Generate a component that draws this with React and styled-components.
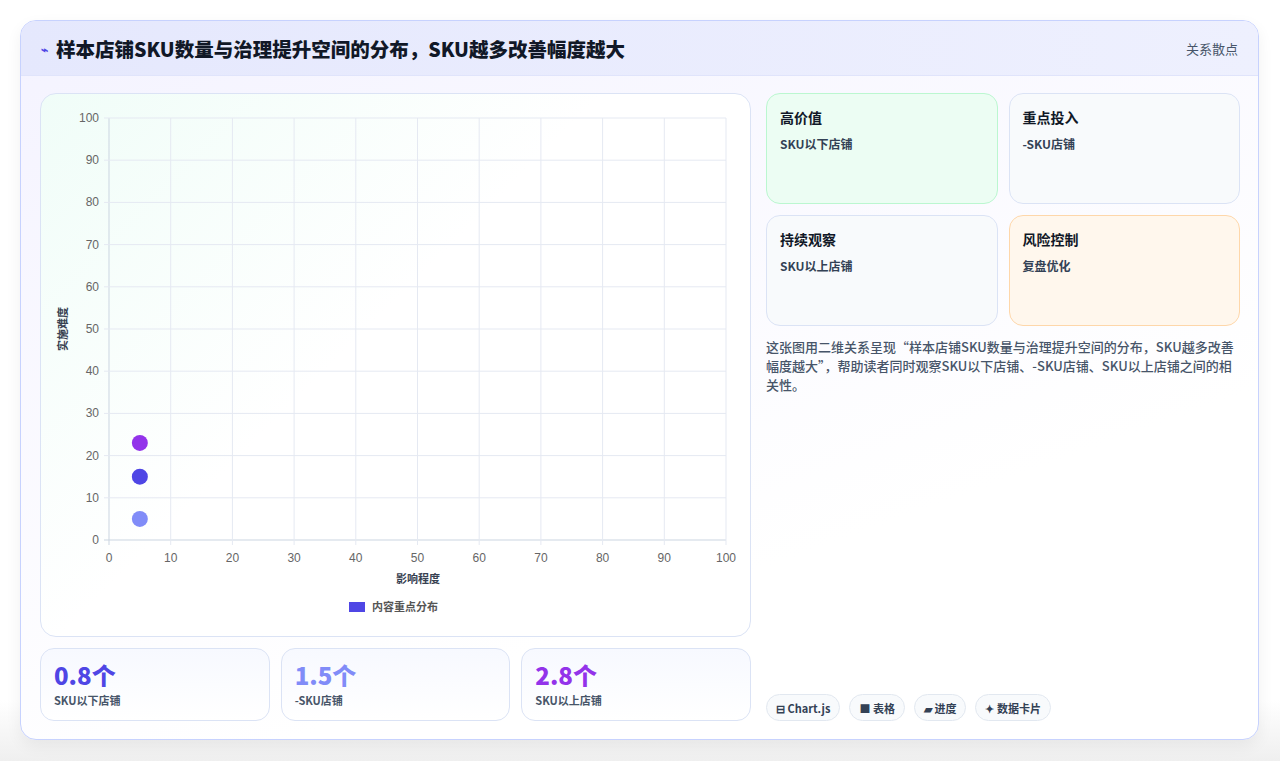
import React from "react";
import styled, { createGlobalStyle } from "styled-components";

const G = createGlobalStyle`
  body{margin:0;background:#f1f1f3;font-family:"Noto Sans CJK SC","Noto Sans",sans-serif;}
`;
const Page = styled.div`padding:20px 21px 21px 20px;height:761px;box-sizing:border-box;background:linear-gradient(#fff 0,#fff 700px,#efefef 761px);`;
const Card = styled.div`height:720px;box-sizing:border-box;border:1px solid #c7d2fe;border-radius:16px;overflow:hidden;display:flex;flex-direction:column;background:linear-gradient(160deg,#f4f3ff,#ffffff 70%);box-shadow:0 6px 16px rgba(0,0,0,.06);`;
const Header = styled.div`height:54px;flex:none;display:flex;align-items:center;justify-content:space-between;padding:0 20px;background:linear-gradient(90deg,#e5e8fd,#eef0fe);border-bottom:1px solid #e0e4fb;`;
const Title = styled.h1`margin:0;font-size:19.5px;font-weight:900;color:#111827;display:flex;align-items:center;gap:8px;`;
const Tag = styled.span`font-size:13px;color:#475569;`;
const Body = styled.div`flex:1;display:flex;gap:15px;padding:17px 18px 18px 19px;`;
const Left = styled.div`width:711px;display:flex;flex-direction:column;gap:11px;`;
const ChartBox = styled.div`height:544px;box-sizing:border-box;border:1px solid #dbe3f5;border-radius:16px;background:linear-gradient(135deg,#f0fdf8,#fff 45%);`;
const Stats = styled.div`display:grid;grid-template-columns:repeat(3,1fr);gap:11px;`;
const Stat = styled.div`height:73px;box-sizing:border-box;border:1px solid #dbe3f5;border-radius:14px;background:linear-gradient(#f7f9ff,#fff);padding:10px 13px;`;
const Val = styled.div`font-size:24px;font-weight:900;color:${p=>p.c};line-height:32px;`;
const Lab = styled.div`font-size:11px;font-weight:700;color:#475569;margin-top:1px;`;
const Right = styled.div`flex:1;display:flex;flex-direction:column;`;
const Quads = styled.div`display:grid;grid-template-columns:1fr 1fr;gap:11px;`;
const Quad = styled.div`height:111px;box-sizing:border-box;border:1px solid ${p=>p.b};border-radius:14px;background:${p=>p.bg};padding:13px 13px;`;
const QT = styled.div`font-size:14px;font-weight:700;color:#111827;`;
const QS = styled.div`font-size:12px;font-weight:700;color:#334155;margin-top:8px;`;
const Desc = styled.p`margin:11px 0 0;font-size:13px;line-height:19px;color:#475569;font-weight:500;`;
const Chips = styled.div`margin-top:auto;display:flex;gap:9px;`;
const Chip = styled.span`height:27px;box-sizing:border-box;padding:0 9px;border:1px solid #e2e8f0;border-radius:14px;background:#f8fafc;font-size:11px;font-weight:700;color:#334155;display:flex;align-items:center;gap:3px;`;

const L=68,R=685,T=24,B=446;
const sx=v=>L+(R-L)*v/100, sy=v=>B-(B-T)*v/100;
const ticks=[0,10,20,30,40,50,60,70,80,90,100];

function Chart(){
  return <svg width="709" height="542" style={{display:"block"}} fontFamily="'Liberation Sans',Arial,sans-serif">
    {ticks.map(t=><g key={t}>
      <line x1={sx(t)} x2={sx(t)} y1={T} y2={B+5} stroke={t===0?"#cbd5e1":"#e5e9f2"}/>
      <line x1={L-5} x2={R} y1={sy(t)} y2={sy(t)} stroke={t===0?"#cbd5e1":"#e5e9f2"}/>
      <text x={L-10} y={sy(t)+4} textAnchor="end" fontSize="12" fill="#666">{t}</text>
      <text x={sx(t)} y={B+22} textAnchor="middle" fontSize="12" fill="#666">{t}</text>
    </g>)}
    <text x={377} y={489} textAnchor="middle" fontSize="11" fontWeight="700" fill="#374151" fontFamily="'Noto Sans CJK SC',sans-serif">影响程度</text>
    <text transform="translate(26 235) rotate(-90)" textAnchor="middle" fontSize="11" fontWeight="700" fill="#374151" fontFamily="'Noto Sans CJK SC',sans-serif">实施难度</text>
    <rect x="308" y="508" width="16" height="10" fill="#4f46e5"/>
    <text x="331" y="517" fontSize="11" fontWeight="700" fill="#555" fontFamily="'Noto Sans CJK SC',sans-serif">内容重点分布</text>
    <circle cx={sx(5)} cy={sy(23)} r="8" fill="#9333ea"/>
    <circle cx={sx(5)} cy={sy(15)} r="8" fill="#4f46e5"/>
    <circle cx={sx(5)} cy={sy(5)} r="8" fill="#818cf8"/>
  </svg>;
}

export default function App(){
  return <><G/><Page><Card>
    <Header>
      <Title><span style={{color:"#4f46e5",fontSize:12}}>⌁</span>样本店铺SKU数量与治理提升空间的分布，SKU越多改善幅度越大</Title>
      <Tag>关系散点</Tag>
    </Header>
    <Body>
      <Left>
        <ChartBox><Chart/></ChartBox>
        <Stats>
          <Stat><Val c="#4f46e5">0.8个</Val><Lab>SKU以下店铺</Lab></Stat>
          <Stat><Val c="#818cf8">1.5个</Val><Lab>-SKU店铺</Lab></Stat>
          <Stat><Val c="#9333ea">2.8个</Val><Lab>SKU以上店铺</Lab></Stat>
        </Stats>
      </Left>
      <Right>
        <Quads>
          <Quad b="#bbf7d0" bg="#ecfdf3"><QT>高价值</QT><QS>SKU以下店铺</QS></Quad>
          <Quad b="#dbe3f5" bg="#f8fafc"><QT>重点投入</QT><QS>-SKU店铺</QS></Quad>
          <Quad b="#dbe3f5" bg="#f8fafc"><QT>持续观察</QT><QS>SKU以上店铺</QS></Quad>
          <Quad b="#fed7aa" bg="#fff7ed"><QT>风险控制</QT><QS>复盘优化</QS></Quad>
        </Quads>
        <Desc>这张图用二维关系呈现“样本店铺SKU数量与治理提升空间的分布，SKU越多改善幅度越大”，帮助读者同时观察SKU以下店铺、-SKU店铺、SKU以上店铺之间的相关性。</Desc>
        <Chips>
          <Chip>⊟ Chart.js</Chip><Chip>■ 表格</Chip><Chip>▰ 进度</Chip><Chip>✦ 数据卡片</Chip>
        </Chips>
      </Right>
    </Body>
  </Card></Page></>;
}
